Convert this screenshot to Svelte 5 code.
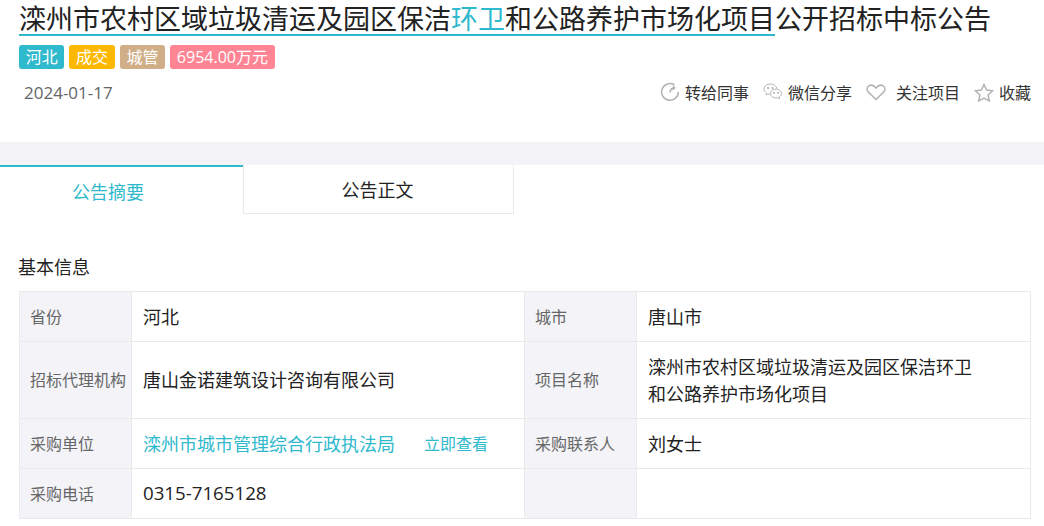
<script>
  const tags = [
    { label: "河北", color: "#2fb9cd" },
    { label: "成交", color: "#ffb800" },
    { label: "城管", color: "#cfae88" },
    { label: "6954.00万元", color: "#ff8594" }
  ];
</script>

<div class="page">
  <h1><span class="hl">滦州市农村区域垃圾清运及园区保洁<em>环卫</em>和公路养护市场化项目</span><span class="rest">公开招标中标公告</span></h1>

  <div class="tags">
    {#each tags as tag}
      <span class="tag" style="background: {tag.color}">{tag.label}</span>
    {/each}
  </div>

  <div class="meta">
    <span class="date">2024-01-17</span>
    <div class="actions">
      <span class="action">
        <svg width="20" height="20" viewBox="0 0 20 20" fill="none" stroke="#b4b4b8" stroke-width="1.600">
          <path d="M14.500 2.800A8.400 8.400 0 1 0 18.400 10" />
          <path d="M10 10.500c.2-2.600 1.800-4.300 4.600-4.600" />
          <path d="M12.900 3.600l2.400 2.300-2.400 2" fill="#b4b4b8" stroke-width="1" />
        </svg>
        转给同事
      </span>
      <span class="action">
        <svg width="20" height="18" viewBox="0 0 20 18" fill="none" stroke="#b4b4b8" stroke-width="1">
          <path d="M7.500 1C3.900 1 1 3.300 1 6.200c0 1.700 1 3.100 2.500 4.100L3 12l2-1c.7.200 1.300.300 2 .300" />
          <path d="M14 5.700C13.300 3 10.700 1 7.500 1" />
          <path d="M13 6c-3.100 0-5.500 2-5.500 4.500S9.900 15 13 15c.6 0 1.200-.1 1.800-.3l1.800 1-.5-1.600c1.400-.8 2.400-2.200 2.400-3.600C18.500 8 16.100 6 13 6z" />
          <circle cx="5.200" cy="5" r=".7" fill="#b4b4b8" />
          <circle cx="9.500" cy="5" r=".7" fill="#b4b4b8" />
          <circle cx="11" cy="9.800" r=".6" fill="#b4b4b8" />
          <circle cx="15" cy="9.800" r=".6" fill="#b4b4b8" />
        </svg>
        微信分享
      </span>
      <span class="action wide">
        <svg width="20" height="17" viewBox="0 0 20 17" fill="none" stroke="#b4b4b8" stroke-width="1.500">
          <path d="M10 15.500L2.400 8.100C.4 6.100.8 3.200 2.800 1.900c2.300-1.400 5-.6 7.200 2.100 2.200-2.700 4.900-3.500 7.200-2.100 2 1.300 2.400 4.200.4 6.200z" />
        </svg>
        关注项目
      </span>
      <span class="action">
        <svg width="20" height="19" viewBox="0 0 20 19" fill="none" stroke="#b4b4b8" stroke-width="1.500">
          <path d="M10 1.500l2.600 5.600 6 .7-4.500 4.100 1.200 6L10 15l-5.300 2.900 1.200-6L1.400 7.800l6-.7z" />
        </svg>
        收藏
      </span>
    </div>
  </div>

  <div class="band"></div>

  <div class="tabs">
    <div class="tab active">公告摘要</div>
    <div class="tab second">公告正文</div>
  </div>

  <h2>基本信息</h2>

  <div class="info">
    <div class="k">省份</div>
    <div class="v">河北</div>
    <div class="k">城市</div>
    <div class="v">唐山市</div>

    <div class="k">招标代理机构</div>
    <div class="v">唐山金诺建筑设计咨询有限公司</div>
    <div class="k">项目名称</div>
    <div class="v tall">滦州市农村区域垃圾清运及园区保洁环卫<br />和公路养护市场化项目</div>

    <div class="k">采购单位</div>
    <div class="v"><span class="link">滦州市城市管理综合行政执法局</span><span class="more">立即查看</span></div>
    <div class="k">采购联系人</div>
    <div class="v">刘女士</div>

    <div class="k">采购电话</div>
    <div class="v phone">0315-7165128</div>
    <div class="k"></div>
    <div class="v"></div>
  </div>
</div>

<style>
  :global(body) {
    background: #fff;
  }

  .page {
    width: 1044px;
    height: 526px;
    overflow: hidden;
    font-family: "Open Sans", "Noto Sans CJK SC", sans-serif;
    color: #222;
  }

  h1 {
    display: flex;
    align-items: flex-start;
    margin: 0;
    padding: 0 0 0 19px;
    height: 45px;
    font-size: 27px;
    font-weight: 400;
    line-height: 38px;
    white-space: nowrap;
  }

  .hl {
    display: block;
    height: 34px;
    border-bottom: 2px solid #2fb9cd;
  }

  em {
    font-style: normal;
    color: #2fb9cd;
  }

  .tags {
    display: flex;
    gap: 5px;
    padding-left: 19px;
  }

  .tag {
    height: 24px;
    line-height: 24px;
    padding: 0 6.700px;
    border-radius: 3px;
    color: #fff;
    font-size: 16px;
  }

  .meta {
    display: flex;
    justify-content: space-between;
    align-items: center;
    height: 46px;
    padding: 0 13px 0 24px;
  }

  .date {
    font-size: 17px;
    color: #666;
  }

  .actions {
    display: flex;
    gap: 14px;
  }

  .action {
    display: flex;
    align-items: center;
    gap: 5px;
    font-size: 16px;
    color: #333;
  }

  .action.wide {
    gap: 10px;
  }

  .band {
    height: 23px;
    margin-top: 27px;
    background: #f3f3f8;
  }

  .tabs {
    display: flex;
  }

  .tab {
    width: 271px;
    height: 49px;
    box-sizing: border-box;
    border: 1px solid #eaeaea;
    border-top: none;
    text-align: center;
    font-size: 18px;
    line-height: 50px;
  }

  .tab.second {
    padding-right: 2px;
  }

  .tab.active {
    width: 243px;
    padding-right: 27px;
    border: none;
    border-top: 2px solid #2fb9cd;
    color: #2fb9cd;
    line-height: 50px;
  }

  h2 {
    margin: 0;
    padding: 29px 0 0 18px;
    height: 48px;
    font-size: 18px;
    font-weight: 400;
    line-height: 48px;
  }

  .info {
    display: grid;
    grid-template-columns: 112px 393px 112px 394px;
    grid-template-rows: 50px 77px 50px 50px;
    width: 1012px;
    margin-left: 19px;
    box-sizing: border-box;
    border-top: 1px solid #eaeaea;
    border-left: 1px solid #eaeaea;
  }

  .k,
  .v {
    display: flex;
    align-items: center;
    padding-bottom: 2px;
    border-right: 1px solid #eaeaea;
    border-bottom: 1px solid #eaeaea;
    box-sizing: border-box;
  }

  .k {
    background: #f3f3f8;
    padding-left: 10px;
    font-size: 16px;
    color: #666;
  }

  .v {
    padding-left: 11px;
    font-size: 18px;
    color: #222;
  }

  .v.tall {
    padding-bottom: 0;
    padding-top: 2px;
    line-height: 27px;
  }

  .phone {
    font-size: 18.700px;
  }

  .link {
    color: #2fb9cd;
  }

  .more {
    margin-left: 29px;
    font-size: 16px;
    color: #2fb9cd;
  }
</style>
